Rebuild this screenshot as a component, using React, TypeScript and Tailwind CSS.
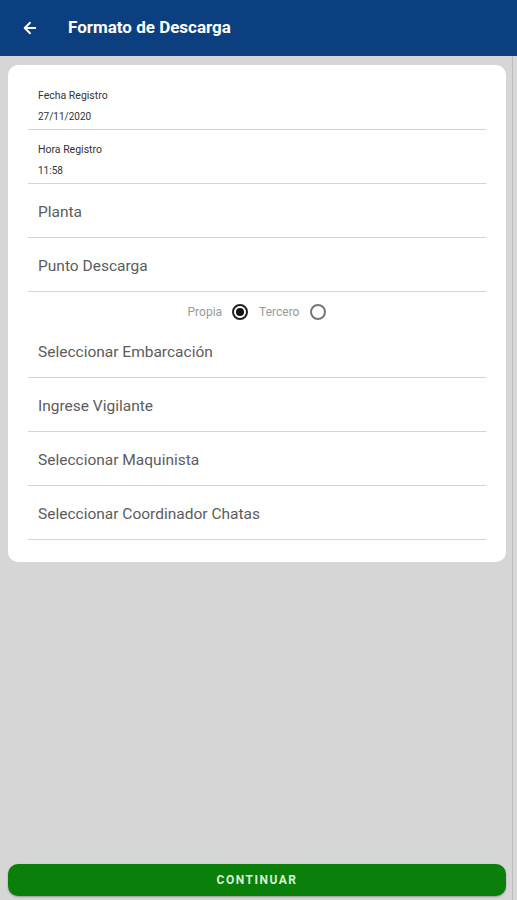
import { ArrowLeft } from "lucide-react";

const fields = ["Seleccionar Embarcación", "Ingrese Vigilante", "Seleccionar Maquinista", "Seleccionar Coordinador Chatas"];

function SmallField({ label, value, top }: { label: string; value: string; top: string }) {
  return (
    <div className={`border-b border-[#d4d4d4] pl-[10px] flex flex-col ${top}`}>
      <span className="text-[10.5px] leading-[12px] text-[#333]">{label}</span>
      <span className="text-[10px] leading-[12px] text-[#333] mt-[9px]">{value}</span>
    </div>
  );
}

function Field({ label }: { label: string }) {
  return (
    <div className="h-[54px] border-b border-[#d4d4d4] pl-[10px] pt-[5px] flex items-center">
      <span className="text-[15.5px] text-[#5c5c5c]">{label}</span>
    </div>
  );
}

export default function App() {
  return (
    <div className="w-[517px] h-[900px] bg-[#d6d6d6] flex flex-col overflow-hidden" style={{ fontFamily: "Roboto, 'Liberation Sans', sans-serif" }}>
      <header className="h-[56px] bg-[#0c3f80] flex items-center shrink-0">
        <ArrowLeft size={18} strokeWidth={2.5} className="text-white ml-[21px]" />
        <h1 className="ml-[29px] text-white text-[17px] font-bold">Formato de Descarga</h1>
      </header>
      <div className="flex-1 flex">
        <div className="w-[512px] flex flex-col">
          <div className="mt-[9px] mx-[8px] w-[498px] bg-white rounded-[10px] px-[20px] pt-[21px] pb-[22px] flex flex-col">
            <SmallField label="Fecha Registro" value="27/11/2020" top="h-[44px] pt-[4px]" />
            <SmallField label="Hora Registro" value="11:58" top="h-[54px] pt-[14px]" />
            <Field label="Planta" />
            <Field label="Punto Descarga" />
            <div className="h-[32px] pt-[8px] flex items-center justify-center gap-[10px]">
              <span className="text-[12px] text-[#9a9a9a]">Propia</span>
              <span className="w-[16px] h-[16px] rounded-full border-[2px] border-[#222] flex items-center justify-center">
                <span className="w-[8px] h-[8px] rounded-full bg-[#111]" />
              </span>
              <span className="text-[12px] text-[#9a9a9a] ml-[1px]">Tercero</span>
              <span className="w-[16px] h-[16px] rounded-full border-[2px] border-[#777] ml-[1px]" />
            </div>
            {fields.map((f) => (
              <Field key={f} label={f} />
            ))}
          </div>
          <div className="flex-1" />
          <button className="mx-[8px] mb-[4px] h-[32px] w-[498px] bg-[#0a800a] rounded-[10px] text-[#d8f0d8] text-[12px] font-bold tracking-[1.5px] shadow-[0_1px_2px_rgba(0,0,0,0.3)]">
            CONTINUAR
          </button>
        </div>
        <div className="w-[1px] bg-[#bdbdbd]" />
        <div className="flex-1 bg-[#d9d9d9]" />
      </div>
    </div>
  );
}
